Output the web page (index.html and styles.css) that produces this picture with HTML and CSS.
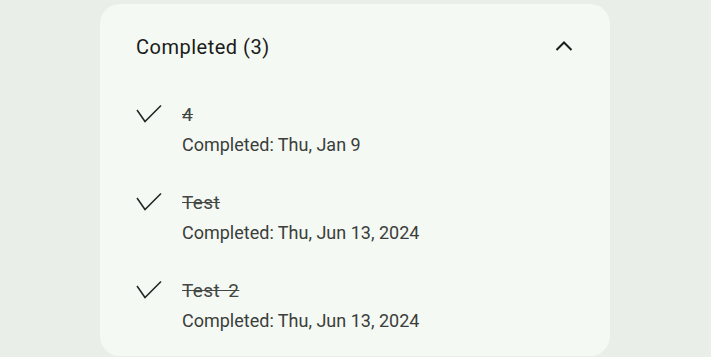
FILE: index.html
```html
<!DOCTYPE html>
<html lang="en">

<head>
  <meta charset="UTF-8">
  <meta name="viewport" content="width=device-width, initial-scale=1.0">
  <title>Completed tasks</title>
  <link rel="stylesheet" href="styles.css">
</head>

<body>
  <div class="card">
    <div class="header">
      <span class="heading">Completed (3)</span>
      <svg class="chevron" width="18" height="12" viewBox="0 0 18 12">
        <polyline points="1.5,10 9,2.5 16.5,10" fill="none" stroke="#1b1f1c" stroke-width="2"/>
      </svg>
    </div>
    <div class="item">
      <svg class="check" width="26" height="20" viewBox="0 0 26 20">
        <polyline points="1,6 9,17.5 25,1.5" fill="none" stroke="#1d2520" stroke-width="1.5"/>
      </svg>
      <div class="text">
        <div class="title">4</div>
        <div class="date">Completed: Thu, Jan 9</div>
      </div>
    </div>
    <div class="item">
      <svg class="check" width="26" height="20" viewBox="0 0 26 20">
        <polyline points="1,6 9,17.5 25,1.5" fill="none" stroke="#1d2520" stroke-width="1.5"/>
      </svg>
      <div class="text">
        <div class="title">Test</div>
        <div class="date">Completed: Thu, Jun 13, 2024</div>
      </div>
    </div>
    <div class="item">
      <svg class="check" width="26" height="20" viewBox="0 0 26 20">
        <polyline points="1,6 9,17.5 25,1.5" fill="none" stroke="#1d2520" stroke-width="1.5"/>
      </svg>
      <div class="text">
        <div class="title">Test 2</div>
        <div class="date">Completed: Thu, Jun 13, 2024</div>
      </div>
    </div>
  </div>
</body>

</html>
```

FILE: styles.css
```css
* {
  margin: 0px;
  padding: 0px;
  box-sizing: border-box;
}
body {
  background-color: #e9eee9;
  font-family: Roboto, "Liberation Sans", sans-serif;
  overflow: hidden;
}
.card {
  background-color: #f4f9f3;
  margin: 4px 0 0 100px;
  width: 510px;
  height: 352px;
  border-radius: 20px;
}
.header {
  height: 86px;
  display: flex;
  align-items: center;
  justify-content: space-between;
  padding: 0 37px 0 36px;
}
.heading {
  font-size: 20px;
  color: #1a1c1a;
  letter-spacing: 0.5px;
}
.chevron {
  display: block;
  margin-top: -3px;
}
.item {
  height: 88px;
  display: flex;
  padding: 13px 0 0 36px;
}
.check {
  display: block;
  width: 26px;
  margin-top: 1px;
  margin-right: 20px;
}
.title {
  font-size: 19px;
  line-height: 24px;
  color: #444744;
  letter-spacing: 0.4px;
  word-spacing: 3px;
  text-decoration: line-through;
}
.date {
  font-size: 18px;
  line-height: 24px;
  margin-top: 6px;
  color: #3b3e3b;
}
```
